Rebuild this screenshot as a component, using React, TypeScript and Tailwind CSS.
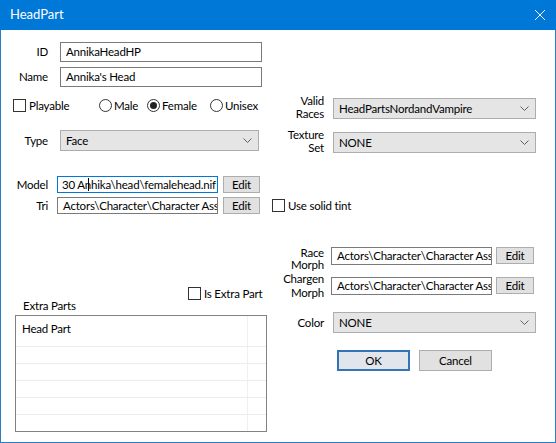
import React from 'react';

const Chevron: React.FC = () => (
    <svg width="9" height="5" viewBox="0 0 9 5" className="shrink-0">
        <path d="M0.5 0.5 L4.5 4.5 L8.5 0.5" fill="none" stroke="#606060" strokeWidth="1" />
    </svg>
);

const Checkbox: React.FC<{ label: string }> = ({ label }) => (
    <div className="flex items-center h-[13px] whitespace-nowrap">
        <span className="w-[13px] h-[13px] border border-[#333] bg-white shrink-0" />
        <span className="ml-[3px] leading-[13px]">{label}</span>
    </div>
);

const Radio: React.FC<{ label: string; checked?: boolean; width: string }> = ({ label, checked, width }) => (
    <div className={`flex items-center h-[13px] whitespace-nowrap ${width}`}>
        <span className="w-[13px] h-[13px] rounded-full border border-[#333] bg-white shrink-0 flex items-center justify-center">
            {checked && <span className="w-[7px] h-[7px] rounded-full bg-[#222]" />}
        </span>
        <span className="ml-[2px] leading-[13px]">{label}</span>
    </div>
);

const Select: React.FC<{ value: string; width: string }> = ({ value, width }) => (
    <div className={`${width} h-[21px] bg-[#e5e5e5] border border-[#adadad] flex items-center justify-between pl-[5px] pr-[6px] shrink-0`}>
        <span className="whitespace-nowrap">{value}</span>
        <Chevron />
    </div>
);

const TextBox: React.FC<{ children: React.ReactNode; width: string; height: string; focused?: boolean }> = ({ children, width, height, focused }) => (
    <div className={`${width} ${height} bg-white border ${focused ? 'border-[#0078d7]' : 'border-[#7a7a7a]'} flex items-center pl-[5px] overflow-hidden whitespace-nowrap shrink-0`}>
        {children}
    </div>
);

const Button: React.FC<{ label: string; width: string; height: string; primary?: boolean }> = ({ label, width, height, primary }) => (
    <div className={`${width} ${height} flex items-center justify-center shrink-0 ${primary ? 'border-2 border-[#3274b5] bg-[#e1e6ec]' : 'border border-[#adadad] bg-[#e1e1e1]'}`}>
        {label}
    </div>
);

export default function App() {
    return (
        <div className="w-[556px] h-[443px] bg-white flex flex-col overflow-hidden text-[11.5px] tracking-[-0.2px] text-black font-['Lato',sans-serif]">
            {/* Title bar */}
            <div className="h-[30px] bg-[#0078d7] flex items-center justify-between pl-[10px] pr-[11px] shrink-0">
                <span className="text-white text-[13px] tracking-normal">HeadPart</span>
                <svg width="10" height="10" viewBox="0 0 10 10">
                    <path d="M0 0 L10 10 M10 0 L0 10" stroke="#fff" strokeWidth="1" />
                </svg>
            </div>

            {/* Body */}
            <div className="flex-1 flex flex-col border-x border-b border-[#2b7cc0]">
                {/* Top section */}
                <div className="flex pt-[12px]">
                    <div className="w-[279px] flex flex-col">
                        <div className="flex items-center h-[20px]">
                            <span className="w-[47px] text-right">ID</span>
                            <div className="ml-[12px]">
                                <TextBox width="w-[202px]" height="h-[20px]">AnnikaHeadHP</TextBox>
                            </div>
                        </div>
                        <div className="flex items-center h-[20px] mt-[5px]">
                            <span className="w-[47px] text-right">Name</span>
                            <div className="ml-[12px]">
                                <TextBox width="w-[202px]" height="h-[20px]">Annika's Head</TextBox>
                            </div>
                        </div>
                        <div className="flex items-center mt-[12px] pl-[12px]">
                            <div className="w-[86px]">
                                <Checkbox label="Playable" />
                            </div>
                            <Radio label="Male" width="w-[48px]" />
                            <Radio label="Female" checked width="w-[63px]" />
                            <Radio label="Unisex" width="w-[50px]" />
                        </div>
                        <div className="flex items-center mt-[18px]">
                            <span className="w-[47px] text-right">Type</span>
                            <div className="ml-[12px]">
                                <Select value="Face" width="w-[199px]" />
                            </div>
                        </div>
                    </div>

                    <div className="flex-1 flex flex-col">
                        <div className="flex items-start h-[21px] mt-[56px]">
                            <div className="w-[44px] flex flex-col items-end leading-[13px] -mt-[4px] whitespace-nowrap">
                                <span>Valid</span>
                                <span>Races</span>
                            </div>
                            <div className="ml-[9px]">
                                <Select value="HeadPartsNordandVampire" width="w-[203px]" />
                            </div>
                        </div>
                        <div className="flex items-start h-[21px] mt-[13px]">
                            <div className="w-[44px] flex flex-col items-end leading-[13px] -mt-[4px] whitespace-nowrap">
                                <span>Texture</span>
                                <span>Set</span>
                            </div>
                            <div className="ml-[9px]">
                                <Select value="NONE" width="w-[203px]" />
                            </div>
                        </div>
                    </div>
                </div>

                {/* Model / Tri */}
                <div className="flex flex-col mt-[23px]">
                    <div className="flex items-center h-[17px]">
                        <span className="w-[47px] text-right">Model</span>
                        <div className="ml-[9px]">
                            <TextBox width="w-[161px]" height="h-[17px]" focused>
                                <span className="-ml-[1px]">30 An</span>
                                <span className="inline-block w-px h-[13px] bg-black -ml-[3px] mr-[2px] relative z-10" />
                                <span>hika\head\femalehead.nif</span>
                            </TextBox>
                        </div>
                        <div className="ml-[5px]">
                            <Button label="Edit" width="w-[37px]" height="h-[17px]" />
                        </div>
                    </div>
                    <div className="flex items-center h-[17px] mt-[4px]">
                        <span className="w-[47px] text-right">Tri</span>
                        <div className="ml-[9px]">
                            <TextBox width="w-[161px]" height="h-[17px]">Actors\Character\Character Assets</TextBox>
                        </div>
                        <div className="ml-[5px]">
                            <Button label="Edit" width="w-[37px]" height="h-[17px]" />
                        </div>
                        <div className="ml-[12px]">
                            <Checkbox label="Use solid tint" />
                        </div>
                    </div>
                </div>

                {/* Bottom section */}
                <div className="flex">
                    <div className="w-[279px] flex flex-col">
                        <div className="flex h-[28px] mt-[73px] pl-[22px]">
                            <span className="w-[165px] self-end mb-[2px] leading-[14px]">Extra Parts</span>
                            <div className="self-start">
                                <Checkbox label="Is Extra Part" />
                            </div>
                        </div>
                        <div className="ml-[14px] w-[252px] h-[117px] border border-[#828282] bg-white flex flex-col overflow-hidden">
                            <div className="flex h-[41px]">
                                <div className="w-[232px] border-r border-[#f0f0f0] pl-[6px] pt-[5px] leading-[16px]">Head Part</div>
                                <div className="flex-1" />
                            </div>
                            {[0, 1, 2, 3, 4].map(i => (
                                <div key={i} className="flex h-[17px] border-t border-[#ececec] shrink-0">
                                    <div className="w-[232px] border-r border-[#f0f0f0]" />
                                    <div className="flex-1" />
                                </div>
                            ))}
                        </div>
                    </div>

                    <div className="flex-1 flex flex-col">
                        <div className="flex items-start h-[18px] mt-[33px]">
                            <div className="w-[44px] flex flex-col items-end leading-[12px] whitespace-nowrap">
                                <span>Race</span>
                                <span>Morph</span>
                            </div>
                            <div className="ml-[7px]">
                                <TextBox width="w-[161px]" height="h-[18px]">Actors\Character\Character Assets</TextBox>
                            </div>
                            <div className="ml-[4px]">
                                <Button label="Edit" width="w-[38px]" height="h-[17px]" />
                            </div>
                        </div>
                        <div className="flex items-start h-[18px] mt-[12px]">
                            <div className="w-[44px] flex flex-col items-end leading-[14px] -mt-[5px] whitespace-nowrap">
                                <span>Chargen</span>
                                <span>Morph</span>
                            </div>
                            <div className="ml-[7px]">
                                <TextBox width="w-[161px]" height="h-[18px]">Actors\Character\Character Assets</TextBox>
                            </div>
                            <div className="ml-[4px]">
                                <Button label="Edit" width="w-[38px]" height="h-[17px]" />
                            </div>
                        </div>
                        <div className="flex items-center h-[21px] mt-[17px]">
                            <span className="w-[44px] text-right">Color</span>
                            <div className="ml-[9px]">
                                <Select value="NONE" width="w-[203px]" />
                            </div>
                        </div>
                        <div className="flex h-[21px] mt-[17px] pl-[57px]">
                            <Button label="OK" width="w-[73px]" height="h-[21px]" primary />
                            <div className="ml-[9px]">
                                <Button label="Cancel" width="w-[73px]" height="h-[21px]" />
                            </div>
                        </div>
                    </div>
                </div>
            </div>
        </div>
    );
}
